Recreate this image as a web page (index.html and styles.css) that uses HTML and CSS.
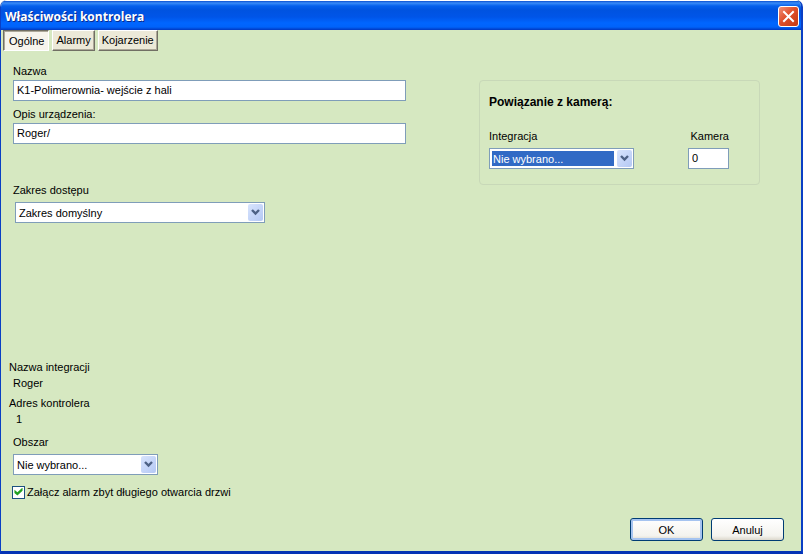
FILE: index.html
```
<!DOCTYPE html>
<html lang="pl">
<head>
  <meta charset="UTF-8">
  <meta name="viewport" content="width=device-width, initial-scale=1.0">
  <title>Właściwości kontrolera</title>
  <link rel="stylesheet" href="styles.css">
</head>
<body>

  <div class="window">
    <header class="titlebar">
      <h1>Właściwości kontrolera</h1>
      <button type="button" class="close" aria-label="Zamknij">
        <svg width="19" height="19" viewBox="0 0 19 19"><path d="M5 5l9 9M14 5l-9 9" stroke="#fff" stroke-width="2" stroke-linecap="square" fill="none"/></svg>
      </button>
    </header>

    <nav class="tabs">
      <button type="button" class="tab active">Ogólne</button>
      <button type="button" class="tab">Alarmy</button>
      <button type="button" class="tab">Kojarzenie</button>
    </nav>

    <form class="content">
      <div class="columns">
        <div class="fields">
          <div class="field">
            <label for="name">Nazwa</label>
            <input type="text" id="name" value="K1-Polimerownia- wejście z hali">
          </div>
          <div class="field">
            <label for="desc">Opis urządzenia:</label>
            <input type="text" id="desc" value="Roger/">
          </div>
          <div class="field access">
            <label for="access">Zakres dostępu</label>
            <div class="combo combo-wide">
              <select id="access"><option>Zakres domyślny</option></select>
              <span class="arrow"><svg width="9" height="7" viewBox="0 0 9 7"><path d="M1 1l3.5 3.5L8 1" stroke="#4d6185" stroke-width="2.400" fill="none"/></svg></span>
            </div>
          </div>
        </div>

        <section class="camera">
          <h2>Powiązanie z kamerą:</h2>
          <div class="camera-row">
            <div class="field">
              <label for="integration">Integracja</label>
              <div class="combo">
                <select id="integration" class="selected"><option>Nie wybrano...</option></select>
                <span class="arrow"><svg width="9" height="7" viewBox="0 0 9 7"><path d="M1 1l3.5 3.5L8 1" stroke="#4d6185" stroke-width="2.400" fill="none"/></svg></span>
              </div>
            </div>
            <div class="field camera-number">
              <label for="camera">Kamera</label>
              <input type="text" id="camera" value="0">
            </div>
          </div>
        </section>
      </div>

      <div class="details">
        <dl>
          <dt>Nazwa integracji</dt>
          <dd>Roger</dd>
          <dt>Adres kontrolera</dt>
          <dd class="address">1</dd>
        </dl>
        <div class="field area">
          <label for="area">Obszar</label>
          <div class="combo">
            <select id="area"><option>Nie wybrano...</option></select>
            <span class="arrow"><svg width="9" height="7" viewBox="0 0 9 7"><path d="M1 1l3.5 3.5L8 1" stroke="#4d6185" stroke-width="2.400" fill="none"/></svg></span>
          </div>
        </div>
        <div class="check">
          <input type="checkbox" id="alarm" checked>
          <label for="alarm">Załącz alarm zbyt długiego otwarcia drzwi</label>
        </div>
      </div>

      <footer class="actions">
        <button type="submit" class="btn default">OK</button>
        <button type="button" class="btn">Anuluj</button>
      </footer>
    </form>
  </div>

</body>
</html>
```
FILE: styles.css
```
* {
  box-sizing: border-box;
}

body {
  margin: 0;
  background: #fff;
  font-family: "Liberation Sans", Arial, sans-serif;
  font-size: 11px;
  line-height: 14px;
  color: #000;
}

button, input, select {
  font: inherit;
  color: inherit;
  margin: 0;
}

.window {
  display: flex;
  flex-direction: column;
  min-height: 100vh;
  background: #d6e8c1;
  border: solid #0a3fc4;
  border-width: 0 2px 3px 1px;
  border-bottom-color: #0433b5;
  border-radius: 7px 7px 0 0;
  overflow: hidden;
}

/* title bar */
.titlebar {
  display: flex;
  align-items: center;
  justify-content: space-between;
  height: 30px;
  padding: 2px 2px 0 4px;
  border-top: 1px solid #fff;
  background: linear-gradient(#0a4fd0 0, #3a8cf8 2px, #0560ec 5px, #0053e0 9px, #0055e8 16px, #0066ff 22px, #0063fa 26px, #0038c0 29px);
}

.titlebar h1 {
  margin: 0;
  font-family: "Open Sans", "Noto Sans", sans-serif;
  font-size: 12px;
  font-weight: bold;
  color: #fff;
  text-shadow: 1px 1px 0 #0a2a8c;
}

.close {
  display: flex;
  width: 21px;
  height: 21px;
  padding: 0;
  border: 1px solid #fff;
  border-radius: 3px;
  background: linear-gradient(135deg, #f09078, #e0502c 45%, #c43a12);
}

/* tabs */
.tabs {
  display: flex;
  gap: 3px;
  padding-left: 2px;
}

.tab {
  height: 21px;
  padding: 0 3px 1px;
  border: 1px solid;
  border-color: #fff #716f64 #716f64 #fff;
  background: #ece9d8;
  box-shadow: inset -1px -1px 0 #aca899;
}

.tab.active {
  padding: 1px 4px 0 5px;
  border-color: #716f64 #fff #fff #716f64;
  background: #f6f4ec;
  box-shadow: inset 1px 1px 0 #aca899;
}

/* form */
.content {
  flex: 1;
  display: flex;
  flex-direction: column;
  padding: 13px 17px 10px 8px;
}

.columns {
  display: flex;
  justify-content: space-between;
  align-items: flex-start;
  gap: 24px;
  padding-right: 24px;
}

.fields {
  flex: 0 1 397px;
  padding-left: 4px;
}

.field {
  display: flex;
  flex-direction: column;
  align-items: flex-start;
  gap: 2px;
  margin-bottom: 6px;
}

input[type="text"] {
  width: 100%;
  height: 21px;
  padding: 0 3px 2px;
  border: 1px solid #7f9db9;
  background: #fff;
}

.access {
  gap: 5px;
  margin-top: 39px;
}

.access .combo {
  margin-left: 2px;
}

.combo {
  position: relative;
  width: 145px;
}

.combo-wide {
  width: 250px;
}

.combo select {
  display: block;
  appearance: none;
  width: 100%;
  height: 21px;
  padding: 2px 19px 2px 2px;
  border: 1px solid #7f9db9;
  border-radius: 0;
  background: #fff;
  text-indent: 1px;
}

.combo select.selected {
  background: linear-gradient(#316ac5, #316ac5) content-box, #fff;
  color: #fff;
}

.arrow {
  position: absolute;
  top: 2px;
  right: 2px;
  bottom: 2px;
  width: 15px;
  display: flex;
  align-items: center;
  justify-content: center;
  border-radius: 2px;
  background: linear-gradient(135deg, #d8e4fd, #b4c8f4);
  pointer-events: none;
}

/* camera group */
.camera {
  flex: 0 1 281px;
  margin-top: 16px;
  padding: 14px 30px 9px 9px;
  border: 1px solid #c8d8b8;
  border-radius: 4px;
}

.camera h2 {
  margin: 0 0 20px;
  font-size: 12px;
  font-weight: bold;
}

.camera-row {
  display: flex;
  justify-content: space-between;
}

.camera .field {
  gap: 5px;
}

.camera-number {
  width: 41px;
}

.camera-number label {
  align-self: flex-end;
}

/* bottom part */
.details {
  margin-top: auto;
}

dl {
  margin: 0 0 9px;
}

dt {
  margin-bottom: 2px;
}

dd {
  margin: 0 0 6px 4px;
}

dd.address {
  margin-left: 7px;
}

.area {
  gap: 5px;
  margin: 0 0 10px 4px;
}

.check {
  display: flex;
  align-items: center;
  gap: 2px;
  padding-left: 3px;
}

.check input {
  appearance: none;
  width: 13px;
  height: 13px;
  border: 1px solid #1c5180;
  background: #fff;
}

.check input:checked::before {
  content: "";
  display: block;
  width: 9px;
  height: 8px;
  margin: 1px;
  background: #21a121;
  clip-path: polygon(5% 28%, 38% 60%, 95% 0, 95% 42%, 38% 100%, 5% 68%);
}

.actions {
  display: flex;
  justify-content: flex-end;
  gap: 8px;
  margin-top: 19px;
}

.btn {
  width: 73px;
  height: 23px;
  padding: 0;
  border: 1px solid #003c74;
  border-radius: 3px;
  background: linear-gradient(#fff, #f4f3ee 80%, #dcd8cc);
}

.btn.default {
  box-shadow: inset 0 0 0 2px #a6c4f0;
}
```
